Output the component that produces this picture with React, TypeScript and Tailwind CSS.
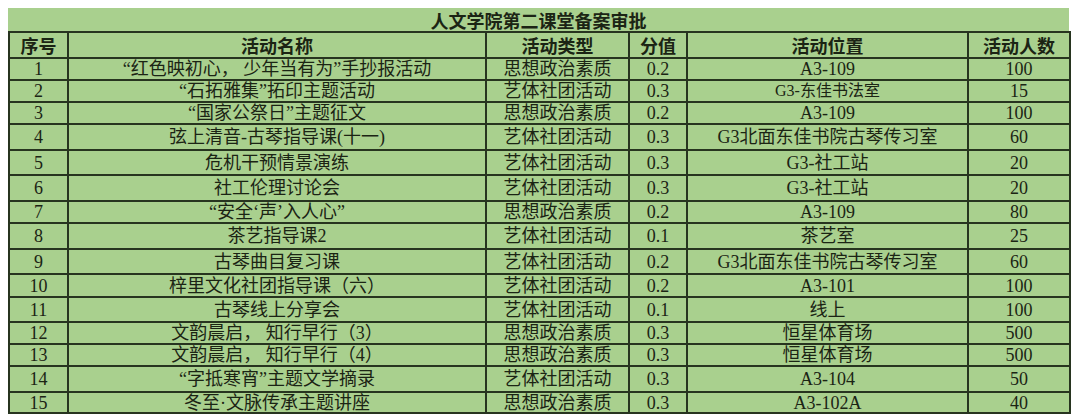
import React from "react";

type Row = { id: string; name: string; type: string; score: string; place: string; num: string; h: string; placeSmall?: boolean };

const rows: Row[] = [
  { id: "1", name: "“红色映初心， 少年当有为”手抄报活动", type: "思想政治素质", score: "0.2", place: "A3-109", num: "100", h: "h-[22px]" },
  { id: "2", name: "“石拓雅集”拓印主题活动", type: "艺体社团活动", score: "0.3", place: "G3-东佳书法室", num: "15", h: "h-[22px]", placeSmall: true },
  { id: "3", name: "“国家公祭日”主题征文", type: "思想政治素质", score: "0.2", place: "A3-109", num: "100", h: "h-[22px]" },
  { id: "4", name: "弦上清音-古琴指导课(十一)", type: "艺体社团活动", score: "0.3", place: "G3北面东佳书院古琴传习室", num: "60", h: "h-[26px]" },
  { id: "5", name: "危机干预情景演练", type: "艺体社团活动", score: "0.3", place: "G3-社工站", num: "20", h: "h-[25px]" },
  { id: "6", name: "社工伦理讨论会", type: "艺体社团活动", score: "0.3", place: "G3-社工站", num: "20", h: "h-[26px]" },
  { id: "7", name: "“安全‘声’入人心”", type: "思想政治素质", score: "0.2", place: "A3-109", num: "80", h: "h-[22px]" },
  { id: "8", name: "茶艺指导课2", type: "艺体社团活动", score: "0.1", place: "茶艺室", num: "25", h: "h-[26px]" },
  { id: "9", name: "古琴曲目复习课", type: "艺体社团活动", score: "0.2", place: "G3北面东佳书院古琴传习室", num: "60", h: "h-[25px]" },
  { id: "10", name: "梓里文化社团指导课（六）", type: "艺体社团活动", score: "0.2", place: "A3-101", num: "100", h: "h-[23px]" },
  { id: "11", name: "古琴线上分享会", type: "艺体社团活动", score: "0.1", place: "线上", num: "100", h: "h-[25px]" },
  { id: "12", name: "文韵晨启， 知行早行（3）", type: "思想政治素质", score: "0.3", place: "恒星体育场", num: "500", h: "h-[22px]" },
  { id: "13", name: "文韵晨启， 知行早行（4）", type: "思想政治素质", score: "0.3", place: "恒星体育场", num: "500", h: "h-[22px]" },
  { id: "14", name: "“字抵寒宵”主题文学摘录", type: "艺体社团活动", score: "0.3", place: "A3-104", num: "50", h: "h-[26px]" },
  { id: "15", name: "冬至·文脉传承主题讲座", type: "思想政治素质", score: "0.3", place: "A3-102A", num: "40", h: "h-[21px]" },
];

const cell = "border-2 border-[#27341f] p-0 text-center align-middle leading-none whitespace-nowrap";

export default function App() {
  return (
    <div className="w-[1080px] h-[416px] bg-white overflow-hidden pt-[8px] pl-[8px] text-[#1b2414]" style={{ fontFamily: '"Liberation Serif", "Noto Sans CJK SC", serif' }}>
      <div className="w-[1061px] bg-[#a9d08e]">
        <div className="h-[23px] flex items-center justify-center text-[18px] font-bold leading-none" style={{ fontFamily: '"Noto Sans CJK SC", sans-serif' }}>
          人文学院第二课堂备案审批
        </div>
        <table className="w-[1061px] table-fixed border-collapse text-[18px]">
          <colgroup>
            <col className="w-[59px]" />
            <col className="w-[418px]" />
            <col className="w-[143px]" />
            <col className="w-[58px]" />
            <col className="w-[281px]" />
            <col className="w-[102px]" />
          </colgroup>
          <thead>
            <tr className="h-[26px] font-bold" style={{ fontFamily: '"Noto Sans CJK SC", sans-serif' }}>
              <th className={cell}>序号</th>
              <th className={cell}>活动名称</th>
              <th className={cell}>活动类型</th>
              <th className={cell}>分值</th>
              <th className={cell}>活动位置</th>
              <th className={cell}>活动人数</th>
            </tr>
          </thead>
          <tbody>
            {rows.map((r) => (
              <tr key={r.id} className={r.h}>
                <td className={cell}>{r.id}</td>
                <td className={cell}>{r.name}</td>
                <td className={cell}>{r.type}</td>
                <td className={cell}>{r.score}</td>
                <td className={cell + (r.placeSmall ? " text-[16px]" : "")}>{r.place}</td>
                <td className={cell}>{r.num}</td>
              </tr>
            ))}
          </tbody>
        </table>
      </div>
    </div>
  );
}
